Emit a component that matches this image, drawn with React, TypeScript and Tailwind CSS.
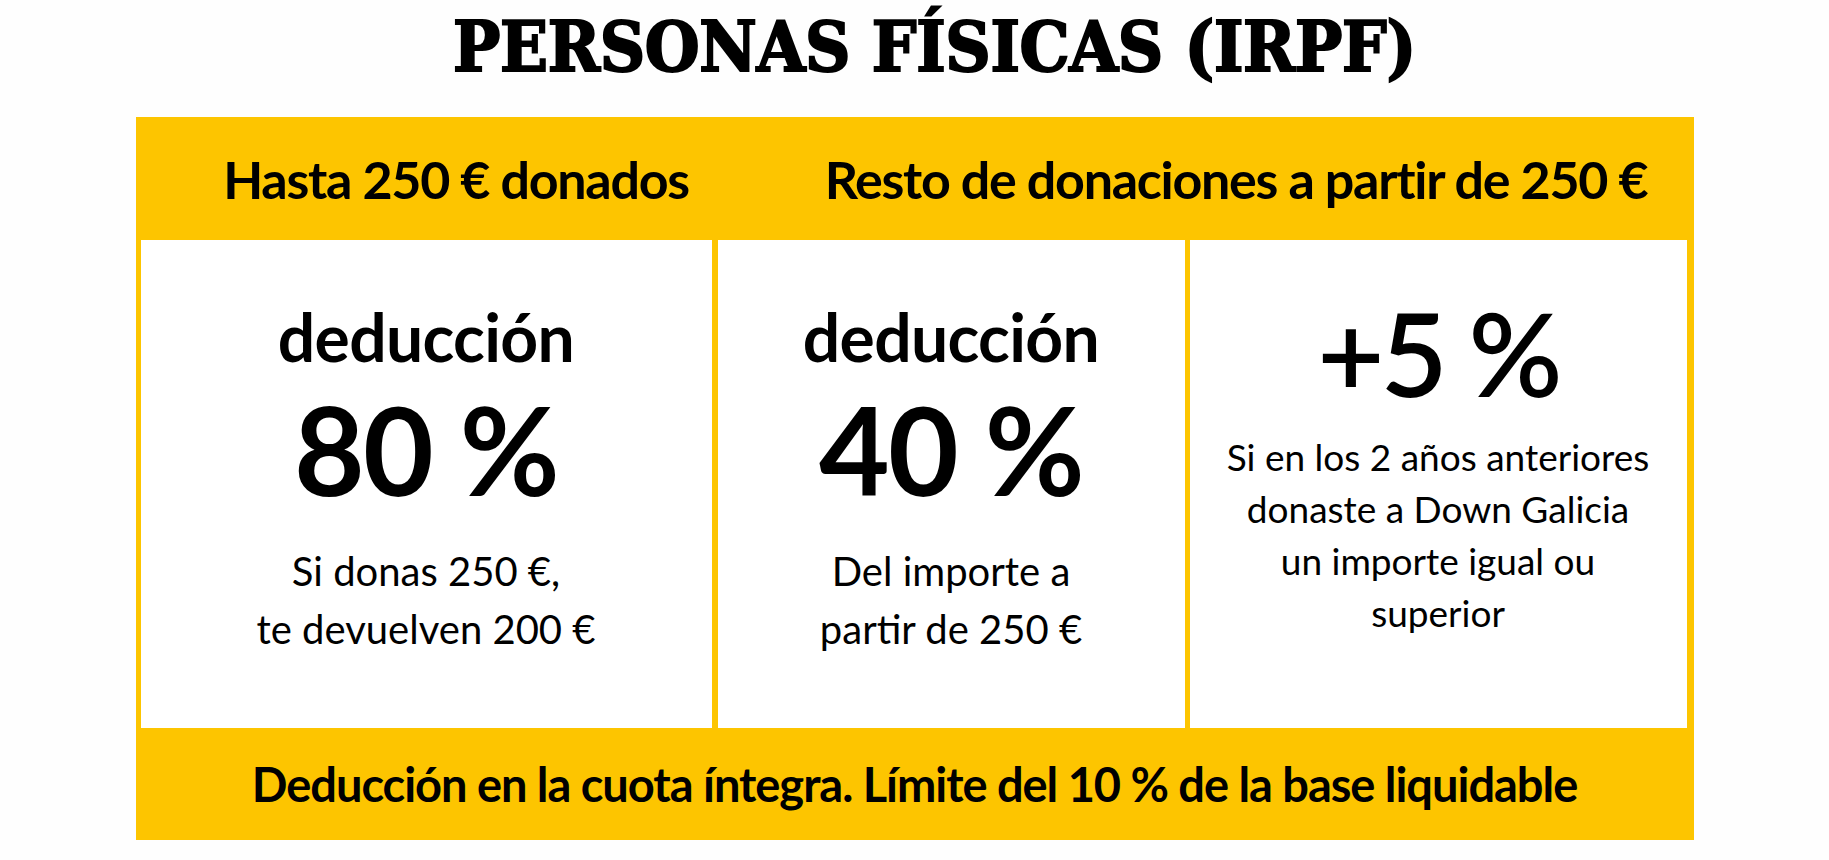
const sans = "font-['Lato','Noto_Sans',sans-serif]";

function Cell({
  width,
  children,
}: {
  width: string;
  children: React.ReactNode;
}) {
  return <div className={`${width} flex flex-col items-center bg-white text-black`}>{children}</div>;
}

export default function App() {
  return (
    <div className={`w-[1829px] h-[860px] bg-[#fefefe] flex flex-col items-center ${sans}`}>
      <h1 className="pt-[12px] pl-[40px] h-[82px] text-[70px] leading-none font-bold tracking-[-0.005em] text-black font-['DejaVu_Serif_Condensed','DejaVu_Serif',serif] [-webkit-text-stroke:2px_#000]">
        PERSONAS FÍSICAS (IRPF)
      </h1>

      <div className="mt-[35px] w-[1558px] bg-[#fdc500] flex flex-col">
        {/* header band */}
        <div className="h-[123px] flex items-center pl-[5px] pr-[7px] gap-[6px] text-[52px] leading-none font-bold tracking-[-0.025em] text-black">
          <div className="w-[571px] flex justify-center pl-[60px]">Hasta 250 € donados</div>
          <div className="flex-1 flex justify-center pl-[68px]">Resto de donaciones a partir de 250 €</div>
        </div>

        {/* cells */}
        <div className="h-[488px] flex pl-[5px] pr-[7px]">
          <Cell width="w-[571px]">
            <div className="mt-[64px] text-[66px] leading-none font-bold tracking-[-0.01em]">deducción</div>
            <div className="mt-[18px] text-[122px] leading-none font-bold tracking-[-0.015em]">80 %</div>
            <div className="mt-[32px] text-[40px] leading-[58px] text-center">
              Si donas 250 €,
              <br />
              te devuelven 200 €
            </div>
          </Cell>
          <div className="w-[6px]" />
          <Cell width="w-[467px]">
            <div className="mt-[64px] text-[66px] leading-none font-bold tracking-[-0.01em]">deducción</div>
            <div className="mt-[18px] text-[122px] leading-none font-bold tracking-[-0.015em]">40 %</div>
            <div className="mt-[32px] text-[40px] leading-[58px] text-center">
              Del importe a
              <br />
              partir de 250 €
            </div>
          </Cell>
          <div className="w-[5px]" />
          <Cell width="w-[497px]">
            <div className="mt-[55px] text-[116px] leading-none font-semibold tracking-[-0.035em]">+5 %</div>
            <div className="mt-[20px] text-[37px] leading-[52px] text-center">
              Si en los 2 años anteriores
              <br />
              donaste a Down Galicia
              <br />
              un importe igual ou
              <br />
              superior
            </div>
          </Cell>
        </div>

        {/* footer band */}
        <div className="h-[112px] flex items-center justify-center text-[47px] leading-none font-bold tracking-[-0.022em] text-black">
          Deducción en la cuota íntegra. Límite del 10 % de la base liquidable
        </div>
      </div>
    </div>
  );
}
